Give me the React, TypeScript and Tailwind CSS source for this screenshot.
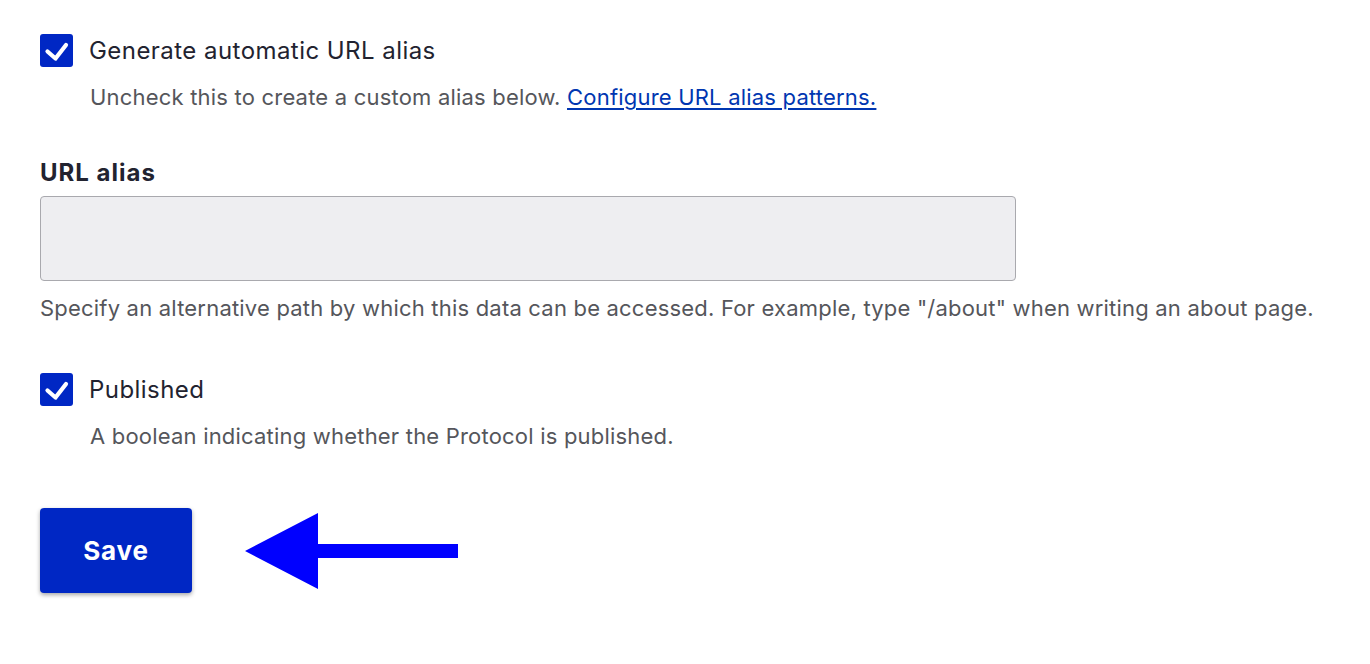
import React from "react";

const font = { fontFamily: "Inter, 'Noto Sans', Arial, sans-serif" };

const CheckBox = () => (
  <span className="flex h-[33px] w-[33px] shrink-0 items-center justify-center rounded-[3px] bg-[#0027c4]">
    <svg width="33" height="33" viewBox="0 0 33 33">
      <path
        d="M7.5 17.5 L15.5 24.5 L26 11"
        fill="none"
        stroke="white"
        strokeWidth="4.2"
        strokeLinecap="round"
        strokeLinejoin="round"
      />
    </svg>
  </span>
);

const CheckField = ({ label, children }: { label: string; children: React.ReactNode }) => (
  <div>
    <label className="flex items-center gap-[16px]">
      <CheckBox />
      <span className="text-[24px] leading-[33px] tracking-[0.45px] text-[#222330]">{label}</span>
    </label>
    <div className="mt-[16px] pl-[50px] text-[22px] leading-[28px] tracking-[0.2px] text-[#55565b]">{children}</div>
  </div>
);

export default function App() {
  return (
    <div className="min-h-[664px] bg-white px-[40px] pt-[34px]" style={font}>
      <CheckField label="Generate automatic URL alias">
        Uncheck this to create a custom alias below.{" "}
        <a href="#" className="text-[#0036b1] underline underline-offset-[3px]">
          Configure URL alias patterns.
        </a>
      </CheckField>

      <div className="mt-[47px]">
        <div className="text-[24px] font-bold leading-[30px] tracking-[1px] text-[#222330]">URL alias</div>
        <input
          type="text"
          disabled
          className="mt-[8px] block h-[85px] w-[976px] rounded-[4px] border border-[#a9a9ae] bg-[#eeeef1]"
        />
        <div className="mt-[13px] text-[22px] leading-[28px] tracking-[0.2px] text-[#55565b]">
          Specify an alternative path by which this data can be accessed. For example, type "/about" when writing an about page.
        </div>
      </div>

      <div className="mt-[51px]">
        <CheckField label="Published">A boolean indicating whether the Protocol is published.</CheckField>
      </div>

      <div className="mt-[58px] flex items-center gap-[53px]">
        <button className="h-[85px] w-[152px] rounded-[4px] bg-[#0027c4] text-[26px] font-bold tracking-[0.8px] text-white shadow-[0_2px_4px_rgba(0,0,0,0.35)]">
          Save
        </button>
        <svg width="213" height="76" viewBox="0 0 213 76">
          <polygon points="0,38 73,0 73,31 213,31 213,45 73,45 73,76" fill="#0000ff" />
        </svg>
      </div>
    </div>
  );
}
